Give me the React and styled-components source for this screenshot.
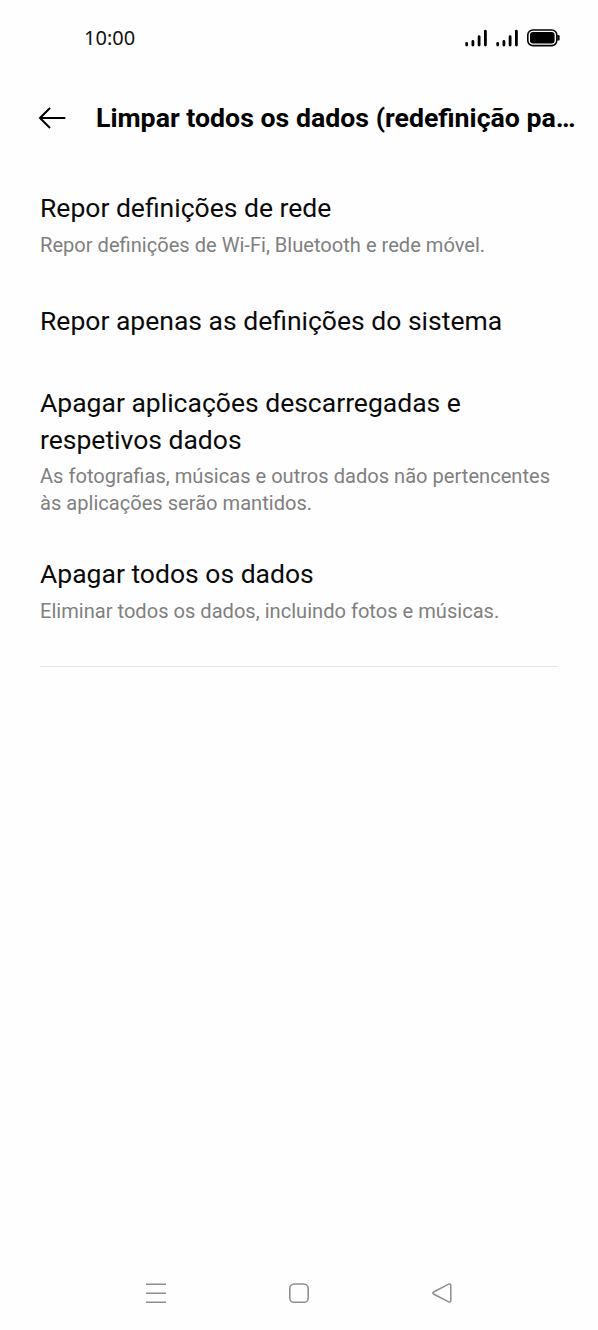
import React from 'react'
import styled, { createGlobalStyle } from 'styled-components'

const GlobalStyle = createGlobalStyle`
  body {
    margin: 0;
    background-color: #fefefe;
    font-family: Roboto, sans-serif;
  }
`;

const Screen = styled.div`
  display: flex;
  flex-direction: column;
  height: 1330px;
  background-color: #fefefe;
  overflow: hidden;
`;

const StatusBar = styled.div`
  display: flex;
  align-items: center;
  justify-content: space-between;
  height: 75px;
  padding: 0 38px 0 84px;
  box-sizing: border-box;
`;

const Clock = styled.span`
  font-family: "Noto Sans", sans-serif;
  font-size: 20px;
  line-height: 27px;
  padding-bottom: 1px;
  color: #111;
`;

const StatusIcons = styled.div`
  display: flex;
  align-items: center;
  gap: 9px;
`;

const Header = styled.header`
  display: flex;
  align-items: center;
  gap: 30px;
  height: 85px;
  padding: 0 0 0 38px;
`;

const Title = styled.h1`
  margin: 0;
  font-size: 26.7px;
  line-height: 36px;
  font-weight: 700;
  color: #000;
  white-space: nowrap;
`;

const List = styled.main`
  display: flex;
  flex-direction: column;
  flex: 1;
  padding: 30px 40px 0;
`;

const Item = styled.section`
  padding-bottom: ${(props) => props.$space}px;
`;

const ItemTitle = styled.h2`
  margin: 0;
  font-size: 26.5px;
  line-height: 36.5px;
  font-weight: 400;
  color: #0a0a0a;
`;

const ItemText = styled.p`
  margin: 5px 0 0;
  font-size: 20.1px;
  line-height: 27px;
  color: #808080;
`;

const Divider = styled.div`
  height: 1px;
  background-color: #e6e6e6;
`;

const NavBar = styled.nav`
  display: flex;
  align-items: center;
  justify-content: space-between;
  height: 74px;
  padding: 0 146px;
`;

const items = [
  { title: 'Repor definições de rede', text: 'Repor definições de Wi-Fi, Bluetooth e rede móvel.', space: 44 },
  { title: 'Repor apenas as definições do sistema', space: 46 },
  {
    title: 'Apagar aplicações descarregadas e respetivos dados',
    text: 'As fotografias, músicas e outros dados não pertencentes às aplicações serão mantidos.',
    space: 39,
  },
  { title: 'Apagar todos os dados', text: 'Eliminar todos os dados, incluindo fotos e músicas.', space: 41 },
];

const Signal = () => (
  <svg width="22" height="18" viewBox="0 0 22 18" stroke="#000" strokeWidth="2.8" strokeLinecap="round">
    <path d="M1.7 14.4V16M7.9 12.4V16M14.1 7.7V16M20.4 2.2V16" />
  </svg>
)

const App = () => {
  return (
    <Screen>
      <GlobalStyle />
      <StatusBar>
        <Clock>10:00</Clock>
        <StatusIcons>
          <Signal />
          <Signal />
          <svg width="33" height="18" viewBox="0 0 33 18">
            <rect x="0.8" y="1" width="29" height="15.6" rx="5" fill="none" stroke="#000" strokeWidth="1.6" />
            <rect x="3" y="3.1" width="24.6" height="11.4" rx="3.2" />
            <path d="M30.4 6H31.4Q32.6 6 32.6 7.2V10.4Q32.6 11.6 31.4 11.6H30.4Z" />
          </svg>
        </StatusIcons>
      </StatusBar>
      <Header>
        <svg width="28" height="24" viewBox="0 0 28 24" fill="none" stroke="#000" strokeWidth="2">
          <path d="M27.3 12H2M12 2L2 12L12 22" />
        </svg>
        <Title>Limpar todos os dados (redefinição pa…</Title>
      </Header>
      <List>
        {items.map((item) => (
          <Item key={item.title} $space={item.space}>
            <ItemTitle>{item.title}</ItemTitle>
            {item.text && <ItemText>{item.text}</ItemText>}
          </Item>
        ))}
        <Divider />
      </List>
      <NavBar>
        <svg width="20" height="20" viewBox="0 0 20 20" stroke="#8e8e8e" strokeWidth="1.6">
          <path d="M0 1.2H20M0 10.2H20M0 19.2H20" />
        </svg>
        <svg width="20" height="20" viewBox="0 0 20 20" fill="none" stroke="#8e8e8e" strokeWidth="1.6">
          <rect x="0.8" y="1" width="18.4" height="18.4" rx="4.5" />
        </svg>
        <svg width="20" height="20" viewBox="0 0 20 20" fill="none" stroke="#8e8e8e" strokeWidth="1.5">
          <path d="M1.5 9L16.7 1.2Q18.8 0.4 18.8 2.4V17.6Q18.8 19.6 16.7 18.8L1.5 11Q0 10 1.5 9Z" />
        </svg>
      </NavBar>
    </Screen>
  )
}

export default App
